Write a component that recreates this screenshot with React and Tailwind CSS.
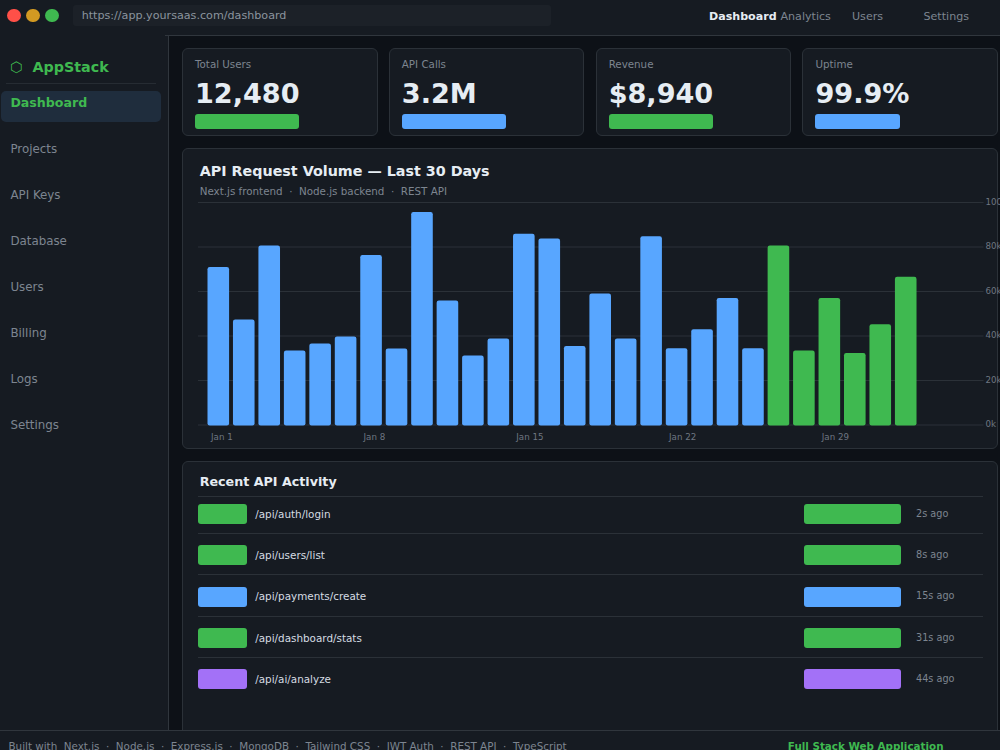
import React from 'react';
import clsx from 'clsx';

const NAV = ['Projects', 'API Keys', 'Database', 'Users', 'Billing', 'Logs', 'Settings'];

const STATS = [
  { label: 'Total Users', value: '12,480', bar: 'w-[104px] bg-[#3fb950]' },
  { label: 'API Calls', value: '3.2M', bar: 'w-[104px] bg-[#58a6ff]' },
  { label: 'Revenue', value: '$8,940', bar: 'w-[104px] bg-[#3fb950]' },
  { label: 'Uptime', value: '99.9%', bar: 'w-[85px] bg-[#58a6ff]' },
];

// bar heights in px, oldest day first
const BARS = [
  158.5, 106, 180, 75, 82, 89, 170.5, 77, 213.5, 125, 70, 87, 191.7, 187, 79.5, 132,
  87, 189.2, 77.2, 96.2, 127.5, 77.2, 180, 75, 127.5, 72.5, 101.2, 148.8,
];

const ACTIVITY = [
  { path: '/api/auth/login', time: '2s ago', color: 'bg-[#3fb950]' },
  { path: '/api/users/list', time: '8s ago', color: 'bg-[#3fb950]' },
  { path: '/api/payments/create', time: '15s ago', color: 'bg-[#58a6ff]' },
  { path: '/api/dashboard/stats', time: '31s ago', color: 'bg-[#3fb950]' },
  { path: '/api/ai/analyze', time: '44s ago', color: 'bg-[#a371f7]' },
];

const STACK = ['Next.js', 'Node.js', 'Express.js', 'MongoDB', 'Tailwind CSS', 'JWT Auth', 'REST API', 'TypeScript'];

const TopBar = () => (
  <header className="h-[35px] shrink-0 flex items-start">
    <div className="flex gap-[5.6px] pl-[7.3px] pt-[8.7px]">
      <span className="size-[13.4px] rounded-full bg-[#ff5048]" />
      <span className="size-[13.4px] rounded-full bg-[#d29922]" />
      <span className="size-[13.4px] rounded-full bg-[#3fb950]" />
    </div>
    <div className="ml-[14px] mt-[5px] w-[478px] h-[21px] rounded-[3px] bg-[#1c2128] pl-[9px] text-[11.15px] leading-[21px] text-[#8b949e]">
      https://app.yoursaas.com/dashboard
    </div>
    <nav className="ml-auto pr-[31px] flex text-[11.1px] leading-[34px] text-[#7d8590]">
      <span className="w-[71.5px] font-bold text-[#e6edf3]">Dashboard</span>
      <span className="w-[71.5px]">Analytics</span>
      <span className="w-[71.5px]">Users</span>
      <span>Settings</span>
    </nav>
  </header>
);

const Sidebar = () => (
  <aside className="w-[169px] shrink-0 border-r border-[#30363d] bg-[#161b22]">
    <div className="mx-[6px] mr-[12px] h-[47.5px] border-b border-[#262c33] pt-[21px] pl-[4px] whitespace-pre text-[14.3px] leading-[21px] font-bold text-[#3fb950]">
      {'⬡  AppStack'}
    </div>
    <ul className="pt-[7px] text-[11.85px] leading-[25px] text-[#7d8590]">
      <li className="h-[46px] pl-px pr-[7px]">
        <div className="h-[31.3px] rounded-[5px] bg-[#1f2d3d] pl-[9.4px] text-[12.6px] leading-[24px] font-bold text-[#3fb950]">Dashboard</div>
      </li>
      {NAV.map((item) => (
        <li key={item} className="h-[46.1px] pl-[10.4px]">{item}</li>
      ))}
    </ul>
  </aside>
);

const StatCard = ({ label, value, bar }) => (
  <div className="h-[88px] rounded-md border border-[#2b3138] bg-[#161b22] pl-[12px] pt-[8px]">
    <div className="text-[10.3px] leading-[15px] text-[#7d8590]">{label}</div>
    <div className="mt-[4px] text-[27.1px] leading-[36px] font-bold text-[#e6edf3]">{value}</div>
    <div className={clsx('mt-[2.4px] h-[15px] rounded-[3px]', bar)} />
  </div>
);

const VolumeChart = () => (
  <svg className="block overflow-visible" width="800" height="250" viewBox="198 198 800 250">
    {[0, 1, 2, 3, 4, 5].map((i) => (
      <line key={i} x1="198" x2="983.5" y1={202.5 + i * 44.5} y2={202.5 + i * 44.5} stroke="#2b3138" />
    ))}
    {BARS.map((h, i) => (
      <rect key={i} x={207.5 + i * 25.46} y={425.5 - h} width="21.6" height={h} rx="2.2" fill={i > 21 ? '#3fb950' : '#58a6ff'} />
    ))}
    <g fill="#6e7681" fontSize="8.7">
      {['100k', '80k', '60k', '40k', '20k', '0k'].map((t, i) => (
        <text key={t} x="985.5" y={204.7 + i * 44.5}>{t}</text>
      ))}
      {['Jan 1', 'Jan 8', 'Jan 15', 'Jan 22', 'Jan 29'].map((t, i) => (
        <text key={t} x={[211, 363.5, 516.3, 669, 821.8][i]} y="439.8">{t}</text>
      ))}
    </g>
  </svg>
);

const ActivityRow = ({ path, time, color, last }) => (
  <div className={clsx('h-[41.35px] flex items-start', !last && 'border-b border-[#2b3138]')}>
    <span className={clsx('mt-[11.6px] w-[48.5px] h-[20px] rounded-[3px]', color)} />
    <span className="mt-[11px] ml-[8.7px] text-[10.4px] leading-[20px] text-[#d5dce3]">{path}</span>
    <span className={clsx('mt-[11.6px] ml-auto w-[96.7px] h-[20px] rounded-[3px]', color)} />
    <span className="mt-[11px] ml-[15px] w-[67px] text-[9.7px] leading-[20px] text-[#7d8590]">{time}</span>
  </div>
);

export default function App() {
  return (
    <div className="w-[1000px] h-[750px] overflow-hidden flex flex-col bg-[#161b22] font-['DejaVu_Sans',sans-serif]">
      <TopBar />
      <div className="h-px shrink-0 ml-[165px] bg-[#30363d]" />
      <div className="h-[694px] shrink-0 flex overflow-hidden">
        <Sidebar />
        <main className="flex-1 min-w-0 bg-[#0d1117] pl-[13px] pr-[2px] pt-[12px]">
          <section className="grid grid-cols-4 gap-[11.3px]">
            {STATS.map((s) => <StatCard key={s.label} {...s} />)}
          </section>

          <section className="mt-[12px] h-[301px] rounded-md border border-[#2b3138] bg-[#161b22] pt-[12px]">
            <h2 className="pl-[16.7px] text-[14.3px] leading-[20px] font-bold text-[#e6edf3]">API Request Volume — Last 30 Days</h2>
            <p className="pl-[16.7px] h-[17px] pt-[1.5px] text-[10.33px] leading-[16px] whitespace-pre text-[#7d8590]">
              {'Next.js frontend  ·  Node.js backend  ·  REST API'}
            </p>
            <div className="pl-[15px]">
              <VolumeChart />
            </div>
          </section>

          <section className="mt-[12px] h-[300px] rounded-md border border-[#2b3138] bg-[#161b22] pl-[15px] pr-[14px] pt-[9px]">
            <h2 className="h-[26px] pl-[1.7px] border-b border-[#2b3138] text-[12.7px] leading-[21px] font-bold text-[#e6edf3]">Recent API Activity</h2>
            {/* first row sits tighter under the heading rule */}
            <div className="-mt-[4.5px]">
              {ACTIVITY.map((row, i) => (
                <ActivityRow key={row.path} {...row} last={i === ACTIVITY.length - 1} />
              ))}
            </div>
          </section>
        </main>
      </div>
      <footer className="h-[40px] shrink-0 border-t border-[#30363d] flex justify-between pl-[8.5px] pr-[56.5px] pt-[5px] text-[10.35px] leading-[20px] text-[#7d8590]">
        <span className="whitespace-pre">{'Built with  ' + STACK.join('  ·  ')}</span>
        <span className="font-bold text-[#3fb950]">Full Stack Web Application</span>
      </footer>
    </div>
  );
}
